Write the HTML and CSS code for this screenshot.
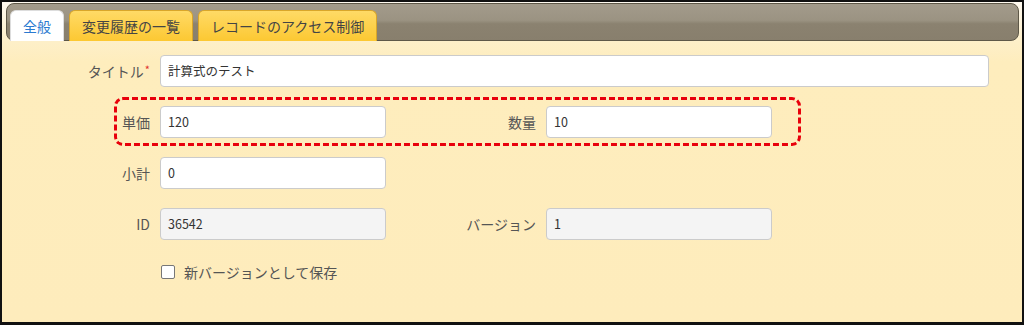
FILE: index.html
```html
<!DOCTYPE html>
<html lang="ja">
<head>
<meta charset="utf-8">
<link rel="stylesheet" href="styles.css">
</head>
<body>
<div class="frame">
  <div class="tabbar">
    <div class="tab active">全般</div>
    <div class="tab">変更履歴の一覧</div>
    <div class="tab">レコードのアクセス制御</div>
  </div>
  <div class="panel">
    <div class="form">
      <label class="lbl">タイトル<span class="req">*</span></label>
      <div class="input wide">計算式のテスト</div>

      <label class="lbl">単価</label>
      <div class="input">120</div>
      <label class="lbl">数量</label>
      <div class="input">10</div>
      <div></div>

      <label class="lbl">小計</label>
      <div class="input">0</div>
      <div></div><div></div><div></div>

      <label class="lbl">ID</label>
      <div class="input ro">36542</div>
      <label class="lbl">バージョン</label>
      <div class="input ro">1</div>
      <div></div>

      <div></div>
      <div class="check"><span class="box"></span>新バージョンとして保存</div>

      <div class="highlight"></div>
    </div>
  </div>
</div>
</body>
</html>
```
FILE: styles.css
```css
html, body {
  margin: 0;
  padding: 0;
}
body {
  width: 1024px;
  height: 325px;
  background: #000;
  font-family: "Noto Sans CJK JP", "Noto Sans", sans-serif;
  font-size: 14px;
  color: #555;
}
.frame {
  box-sizing: border-box;
  width: 1024px;
  height: 325px;
  border: 2px solid #111;
  border-bottom-width: 3px;
  background: linear-gradient(#fffaf0 0px, #fdefc8 40px, #feedbd 60px, #feecbc 100%);
  display: flex;
  flex-direction: column;
}
.tabbar {
  margin: 1px 3px 0 4px;
  height: 38px;
  box-sizing: border-box;
  border: 1px solid #5e5848;
  border-radius: 8px;
  background: linear-gradient(#a39b8b 0%, #9b9382 45%, #8b8270 55%, #887f6d 100%);
  display: flex;
  align-items: flex-end;
  gap: 5px;
  padding-left: 3px;
}
.tab {
  height: 31px;
  box-sizing: border-box;
  padding: 0 12px;
  border: 1px solid #d9a62a;
  border-bottom: none;
  border-radius: 6px 6px 0 0;
  background: linear-gradient(#ffda66, #fcc832);
  color: #444;
  font-size: 14px;
  line-height: 30px;
  margin-bottom: -1px;
}
.tab.active {
  background: #fff;
  border-color: #ddd;
  color: #2a7ad0;
  padding: 0 12px;
}
.panel {
  flex: 1;
  padding-top: 14px;
}
.form {
  position: relative;
  display: grid;
  grid-template-columns: 148px 226px 140px 226px 216px;
  column-gap: 10px;
  row-gap: 19px;
  align-items: center;
}
.lbl {
  text-align: right;
  color: #555;
  white-space: nowrap;
}
.req {
  color: #e03030;
  font-size: 11px;
  vertical-align: top;
  margin-left: 1px;
}
.input {
  box-sizing: border-box;
  height: 32px;
  border: 1px solid #cbcbcb;
  border-radius: 4px;
  background: #fff;
  color: #333;
  padding: 0 7px;
  font-size: 12.5px;
  line-height: 30px;
}
.input.wide {
  grid-column: 2 / -1;
  width: 829px;
}
.input.ro {
  background: #f4f4f4;
}
.check {
  grid-column: 2 / 5;
  display: flex;
  align-items: center;
  gap: 9px;
  color: #555;
  margin-top: 3px;
  height: 20px;
}
.box {
  width: 12px;
  height: 12px;
  border: 1px solid #777;
  border-radius: 2px;
  background: #fff;
  margin-left: 1px;
}
.highlight {
  position: absolute;
  left: 112px;
  top: 42px;
  width: 681px;
  height: 43px;
  border: 3px dashed #e8000b;
  border-radius: 9px;
  pointer-events: none;
}
```
